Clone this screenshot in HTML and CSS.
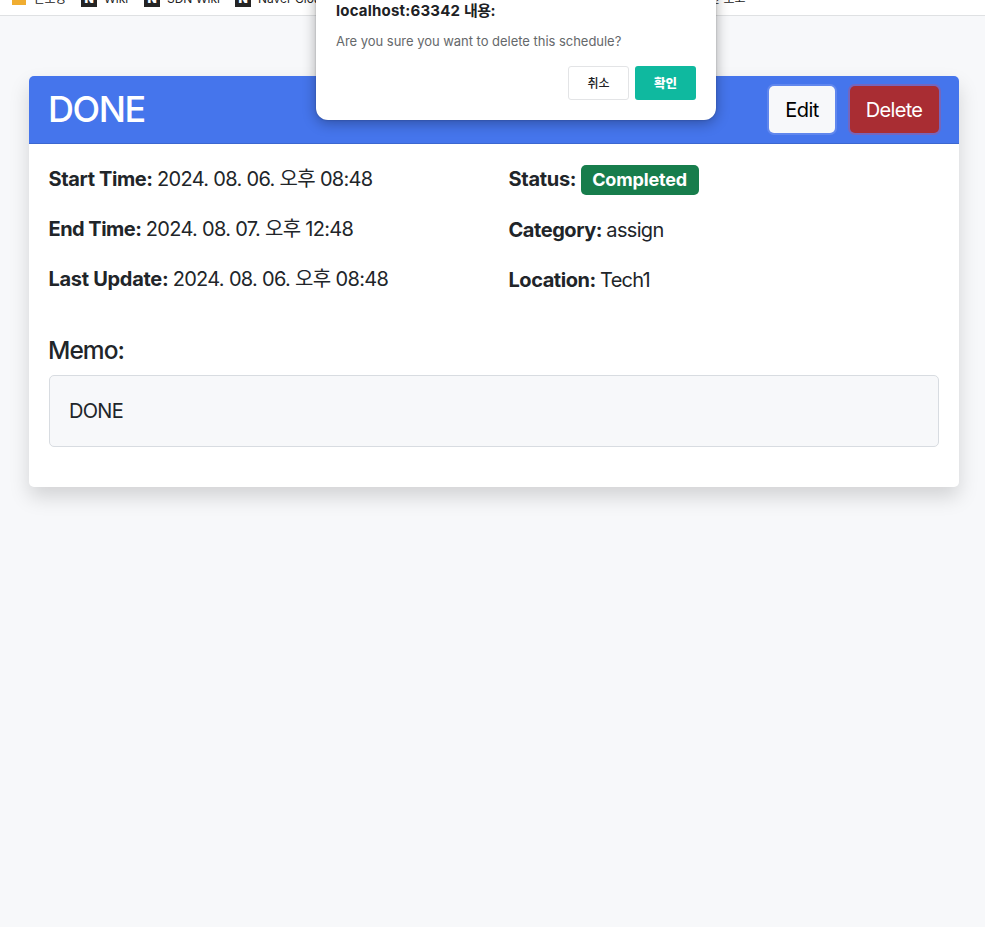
FILE: index.html
```html
<!DOCTYPE html>
<html lang="ko">
<head>
<meta charset="utf-8">
<title>Schedule</title>
<link rel="stylesheet" href="styles.css">
</head>
<body>
<nav class="bookmarks">
  <div class="bookmark bm-folder"><i class="folder"></i><span>온보딩</span></div>
  <div class="bookmark bm-wiki"><i class="site">N</i><span>Wiki</span></div>
  <div class="bookmark bm-sdn"><i class="site">N</i><span>SDN Wiki</span></div>
  <div class="bookmark bm-cloud"><i class="site">N</i><span>Naver Cloud</span></div>
  <div class="bookmark bm-last"><span>주간 보고</span></div>
</nav>
<main class="card">
  <header class="card-header">
    <h1>DONE</h1>
    <div class="actions">
      <button class="btn edit"><span>Edit</span></button>
      <button class="btn delete"><span>Delete</span></button>
    </div>
  </header>
  <section class="card-body">
    <div class="details">
      <div>
        <p><strong class="k-start">Start Time:</strong> <span class="date">2024. 08. 06. 오후 08:48</span></p>
        <p><strong class="k-end">End Time:</strong> <span class="date">2024. 08. 07. 오후 12:48</span></p>
        <p><strong class="k-update">Last Update:</strong> <span class="date">2024. 08. 06. 오후 08:48</span></p>
      </div>
      <div>
        <p class="status"><strong class="k-status">Status:</strong> <span class="badge">Completed</span></p>
        <p><strong class="k-category">Category:</strong> <span class="assign">assign</span></p>
        <p><strong class="k-location">Location:</strong> <span class="tech">Tech1</span></p>
      </div>
    </div>
    <h2>Memo:</h2>
    <div class="memo"><span>DONE</span></div>
  </section>
</main>
<div class="dialog" role="dialog">
  <div class="dialog-title">localhost:63342 <span>내용:</span></div>
  <p>Are you sure you want to delete this schedule?</p>
  <div class="dialog-actions">
    <button class="cancel">취소</button>
    <button class="confirm">확인</button>
  </div>
</div>
</body>
</html>
```
FILE: styles.css
```css
* { box-sizing: border-box; }
body {
  margin: 0;
  height: 927px;
  overflow: hidden;
  background: #f7f8fa;
  color: #212529;
  font: 20px/30px Inter, "Noto Sans CJK KR", sans-serif;
}
h1, h2, p { margin: 0; }
button { font-family: inherit; padding: 0; }

.bookmarks {
  height: 16px;
  overflow: hidden;
  display: flex;
  align-items: flex-start;
  padding-left: 12px;
  background: #fff;
  border-bottom: 1px solid #dfe1e3;
  font-size: 12px;
  line-height: 16px;
  color: #222;
}
.bookmark { display: flex; gap: 7px; margin-top: -9px; flex: none; white-space: nowrap; }
.folder { width: 14px; height: 14px; background: #f0ad31; }
.site {
  width: 16px; height: 16px;
  background: #242424; color: #fff;
  font: 900 12px/16px Inter, sans-serif;
  text-align: center;
}
.bm-folder { width: 69px; gap: 8px; letter-spacing: -.6px; }
.bm-wiki { width: 63px; }
.bm-sdn { width: 91px; }
.bm-cloud { width: 463px; }

.card {
  width: 930px;
  height: 411px;
  margin: 60px 0 0 29px;
  background: #fff;
  border-radius: 5px;
  box-shadow: 0 10px 20px rgba(0, 0, 0, .15);
}
.card-header {
  height: 68px;
  display: flex;
  align-items: center;
  justify-content: space-between;
  padding: 0 20px 0 19px;
  background: #4575ec;
  border-bottom: 1px solid #3c67d0;
  border-radius: 5px 5px 0 0;
}
h1 { color: #fff; font-size: 36px; font-weight: 500; letter-spacing: -1.4px; line-height: 42px; margin-bottom: 1px; }
.actions { display: flex; gap: 15px; }
.btn { height: 47px; border: 0; border-radius: 5px; font-size: 20px; line-height: 30px; }
.edit { width: 66px; background: #f7f8fa; color: #000; box-shadow: 0 0 0 2px #6087ee; letter-spacing: -.5px; }
.delete { width: 89px; padding-right: 1px; background: #a92d33; color: #fff; box-shadow: 0 0 0 2px #7566bd; letter-spacing: -.65px; }

.card-body { padding: 20px; }
.details { display: grid; grid-template-columns: 460px 1fr; height: 171px; margin-left: -.5px; }
.details p { margin-bottom: 20px; white-space: nowrap; letter-spacing: -.68px; }
.details .status { height: 31px; }
strong { font-weight: 700; }
.date, .assign, .tech { margin-left: -.6px; }
.k-start { letter-spacing: -.38px; }
.k-end { letter-spacing: -.52px; }
.k-update { letter-spacing: -.3px; }
.k-status { letter-spacing: -.3px; }
.k-category, .k-location { letter-spacing: -.45px; }
.tech { letter-spacing: -.8px; }
.badge {
  display: inline-flex;
  align-items: center;
  justify-content: center;
  vertical-align: top;
  width: 118px;
  height: 30px;
  margin-top: 1px;
  padding-right: 1px;
  border-radius: 5px;
  background: #177d4c;
  color: #fff;
  font-size: 18px;
  font-weight: 700;
  letter-spacing: -.15px;
}
h2 { font-size: 24.5px; font-weight: 500; line-height: 30px; margin: 0 0 10px -1px; letter-spacing: -.95px; }
.memo { height: 72px; padding: 20px 19px; background: #f7f8fa; border: 1px solid #d8dce1; border-radius: 5px; letter-spacing: -.7px; }

.dialog {
  position: absolute;
  left: 316px;
  top: -20px;
  width: 400px;
  height: 140px;
  padding: 21px 20px 20px;
  background: #fff;
  border-radius: 0 0 12px 12px;
  box-shadow: 0 3px 14px rgba(0, 0, 0, .32), 0 0 2px rgba(0, 0, 0, .25);
}
.dialog-title { color: #202124; font-size: 15px; font-weight: 700; line-height: 20px; white-space: nowrap; letter-spacing: .2px; }
.dialog-title span { letter-spacing: -.5px; }
.dialog p { margin-top: 10px; color: #65686b; font-size: 13px; line-height: 20px; white-space: nowrap; letter-spacing: -.03px; }
.dialog-actions { display: flex; justify-content: flex-end; gap: 6px; margin-top: 15px; }
.dialog button { width: 61px; height: 34px; border-radius: 3px; font-size: 12px; padding-bottom: 2px; }
.cancel { background: #fff; border: 1px solid #e3e4e6; color: #202124; font-weight: 500; }
.dialog .confirm { background: #0fb99f; border: 0; color: #fff; font-size: 12.5px; font-weight: 900; }
```
